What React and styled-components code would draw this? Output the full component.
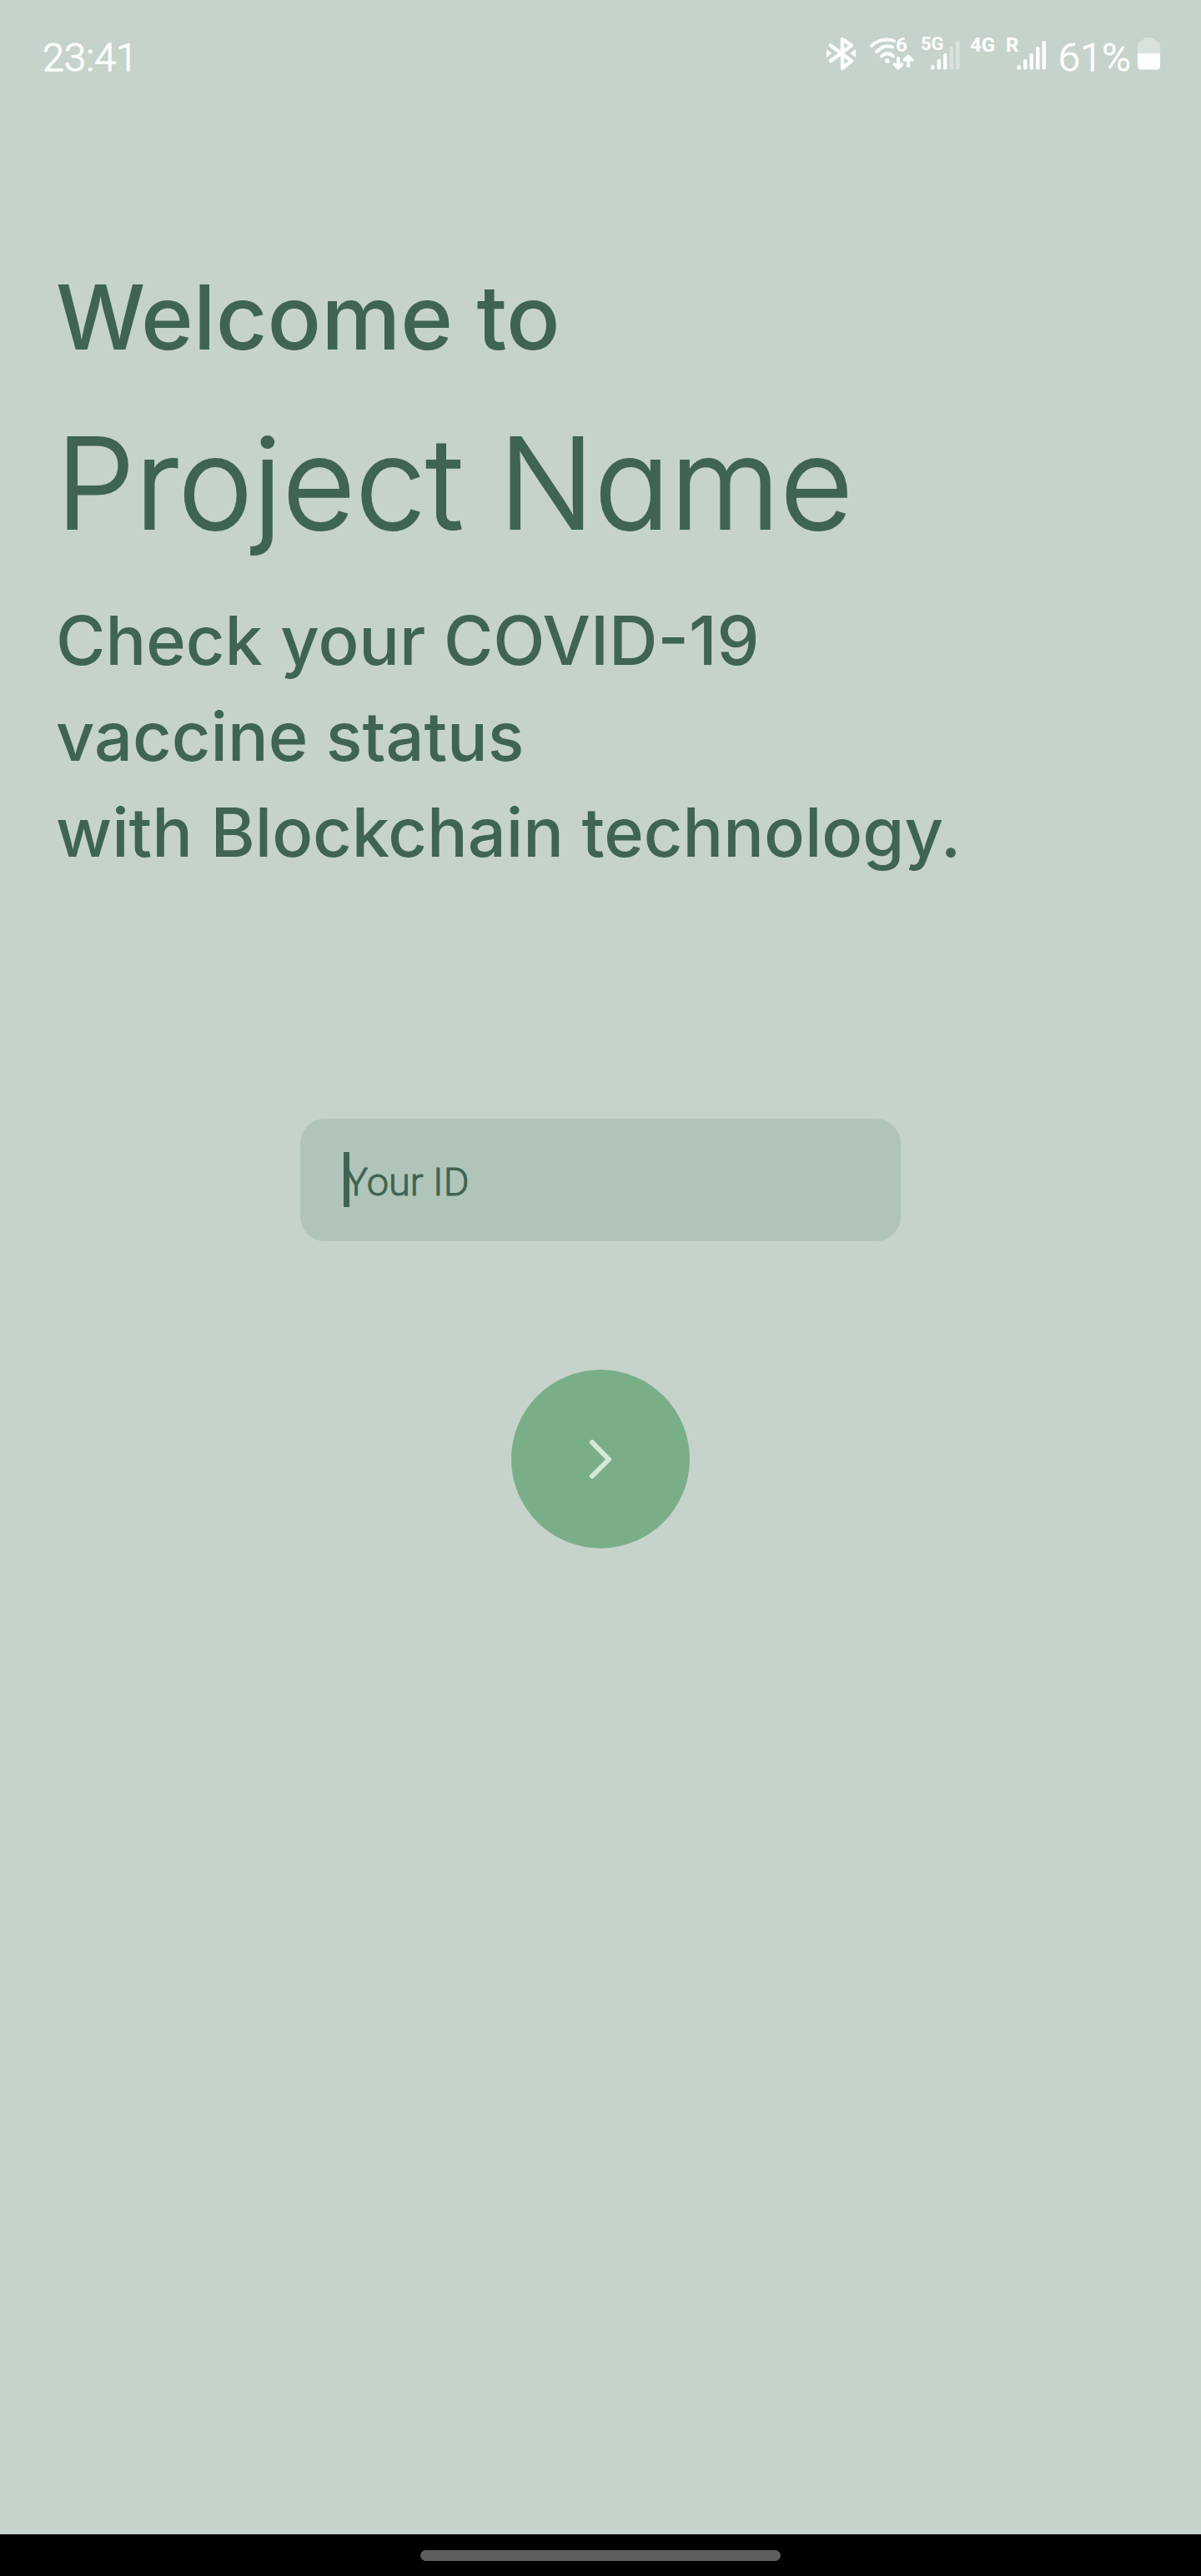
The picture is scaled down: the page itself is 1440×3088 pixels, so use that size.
import React from "react";
import styled, { createGlobalStyle } from "styled-components";

const color = {
  background: "#c6d3ca",
  ink: "#3f6452",
  field: "#b1c4ba",
  accent: "#7aae89",
  accentInk: "#d5e8d5",
  status: "#fcfffc",
};

const GlobalStyle = createGlobalStyle`
  *, *::before, *::after { box-sizing: border-box; }
  body { margin: 0; background: ${color.background}; }
`;

const Page = styled.div`
  min-height: 100vh;
  display: flex;
  flex-direction: column;
  background: ${color.background};
  color: ${color.ink};
  font-family: Inter, "Liberation Sans", sans-serif;
`;

const StatusBar = styled.header`
  display: flex;
  align-items: baseline;
  justify-content: space-between;
  padding: 41px 49px 0 51px;
  color: ${color.status};
  font: 300 47px/56px Roboto, "Liberation Sans", sans-serif;
`;

const StatusText = styled.span`
  -webkit-text-stroke: 1px currentColor;
`;

const StatusGroup = styled.div`
  display: flex;
  align-items: baseline;
  gap: 8px;
`;

const Glyph = styled.svg`
  display: block;
  flex: none;
  overflow: visible;
  fill: currentColor;
  stroke: none;
`;

const GlyphText = styled.text`
  font: 700 ${(p) => (p.$small ? 22 : 24)}px Roboto, "Liberation Sans", sans-serif;
`;

const Line = styled.path`
  fill: none;
  stroke: currentColor;
  stroke-width: ${(p) => p.$weight || 4};
  stroke-linecap: round;
  stroke-linejoin: round;
`;

const Main = styled.main`
  flex: 1;
  display: flex;
  flex-direction: column;
  padding-top: 216px;
`;

const Intro = styled.section`
  display: flex;
  flex-direction: column;
  gap: 42px;
  padding: 0 67px;
`;

const Greeting = styled.p`
  margin: 0;
  font-size: 107px;
  font-weight: 500;
  line-height: 134px;
`;

const Title = styled.h1`
  margin: 0;
  font-size: 151px;
  font-weight: 300;
  line-height: 180px;
  font-feature-settings: "cv11";
  -webkit-text-stroke: 2px currentColor;
`;

const Tagline = styled.p`
  margin: 0;
  font-size: 81px;
  font-weight: 500;
  line-height: 115px;
`;

const SignIn = styled.form`
  display: flex;
  flex-direction: column;
  align-items: center;
  gap: 154px;
  margin-top: 285px;
`;

const Field = styled.div`
  position: relative;
  width: 50%;
`;

const IdInput = styled.input`
  display: block;
  width: 100%;
  height: 147px;
  padding: 4px 53px 0;
  border: 0;
  border-radius: 30px;
  outline: 0;
  background: ${color.field};
  color: ${color.ink};
  caret-color: transparent;
  font: 300 47px Roboto, "Liberation Sans", sans-serif;
  -webkit-text-stroke: 1px currentColor;

  &::placeholder {
    color: ${color.ink};
    opacity: 1;
  }
`;

const Caret = styled.span`
  position: absolute;
  left: 52px;
  top: 40px;
  width: 7px;
  height: 66px;
  background: ${color.ink};
`;

const NextButton = styled.button`
  display: grid;
  place-items: center;
  width: 214px;
  height: 214px;
  padding: 0;
  border: 0;
  border-radius: 50%;
  background: ${color.accent};
  color: ${color.accentInk};
`;

const GestureBar = styled.footer`
  display: flex;
  justify-content: center;
  padding: 19px 0 18px;
  background: #000;
`;

const GestureHandle = styled.div`
  width: 30%;
  height: 13px;
  border-radius: 7px;
  background: #5e5e5e;
`;

const BAR_TOPS = [33, 26, 19, 11, 4];

function SignalBars({ x, active }) {
  return BAR_TOPS.map((top, i) => (
    <rect
      key={top}
      x={x + i * 7.5}
      y={top}
      width="4.5"
      height={38.5 - top}
      rx="2"
      opacity={i < active ? 1 : 0.35}
    />
  ));
}

function BluetoothGlyph() {
  return (
    <Glyph width="44" height="40" viewBox="0 0 44 40" aria-label="Bluetooth">
      <Line $weight={4.5} d="M5 9.5 30 28 19 37V2L30 9.5 5 28" />
      <path d="M0 14v10l6-5zM35 14v10l-7-5z" />
    </Glyph>
  );
}

function WifiGlyph() {
  return (
    <Glyph width="54" height="40" viewBox="0 0 54 40" aria-label="Wi-Fi 6">
      <Line d="M2 10C10 2 21 1 29 4M8 17C14 11 21 9 27 11.500M14 22.500C18 18 24 18 28 22.500" />
      <circle cx="21" cy="28" r="2.800" />
      <GlyphText x="31" y="17">6</GlyphText>
      <Line d="M34 25V36M29.500 32 34 36.500 38.500 32M46 34V23M41.500 27 46 22.500 50.500 27" />
    </Glyph>
  );
}

function PrimarySignal() {
  return (
    <Glyph width="50" height="40" viewBox="0 0 50 40" aria-label="5G signal">
      <GlyphText $small x="-1" y="15">5G</GlyphText>
      <SignalBars x={11} active={3} />
    </Glyph>
  );
}

function RoamingSignal() {
  return (
    <Glyph width="98" height="40" viewBox="0 0 98 40" aria-label="4G roaming signal">
      <GlyphText x="0" y="17">4G</GlyphText>
      <GlyphText x="43" y="17">R</GlyphText>
      <SignalBars x={56.5} active={5} />
    </Glyph>
  );
}

function BatteryGlyph() {
  return (
    <Glyph width="27" height="40" viewBox="0 0 27 40" aria-label="Battery">
      <path opacity="0.35" d="M0 19V9Q0 5 5 4L8 1Q9 0 11 0H16Q18 0 19 1L22 4Q27 5 27 9V19Z" />
      <path d="M0 19H27V34Q27 38.500 22.500 38.500H4.500Q0 38.500 0 34Z" />
    </Glyph>
  );
}

export default function App() {
  return (
    <Page>
      <GlobalStyle />
      <StatusBar>
        <StatusText as="time">23:41</StatusText>
        <StatusGroup>
          <BluetoothGlyph />
          <WifiGlyph />
          <PrimarySignal />
          <RoamingSignal />
          <StatusText>61%</StatusText>
          <BatteryGlyph />
        </StatusGroup>
      </StatusBar>
      <Main>
        <Intro>
          <Greeting>Welcome to</Greeting>
          <Title>Project Name</Title>
          <Tagline>
            Check your COVID-19
            <br />
            vaccine status
            <br />
            with Blockchain technology.
          </Tagline>
        </Intro>
        <SignIn onSubmit={(event) => event.preventDefault()}>
          <Field>
            <IdInput type="text" placeholder="Your ID" aria-label="Your ID" />
            <Caret />
          </Field>
          <NextButton type="submit" aria-label="Continue">
            <Glyph width="28" height="48" viewBox="0 0 28 48">
              <Line $weight={6} d="M4 4 24 24.500 4 44.500" />
            </Glyph>
          </NextButton>
        </SignIn>
      </Main>
      <GestureBar>
        <GestureHandle />
      </GestureBar>
    </Page>
  );
}
